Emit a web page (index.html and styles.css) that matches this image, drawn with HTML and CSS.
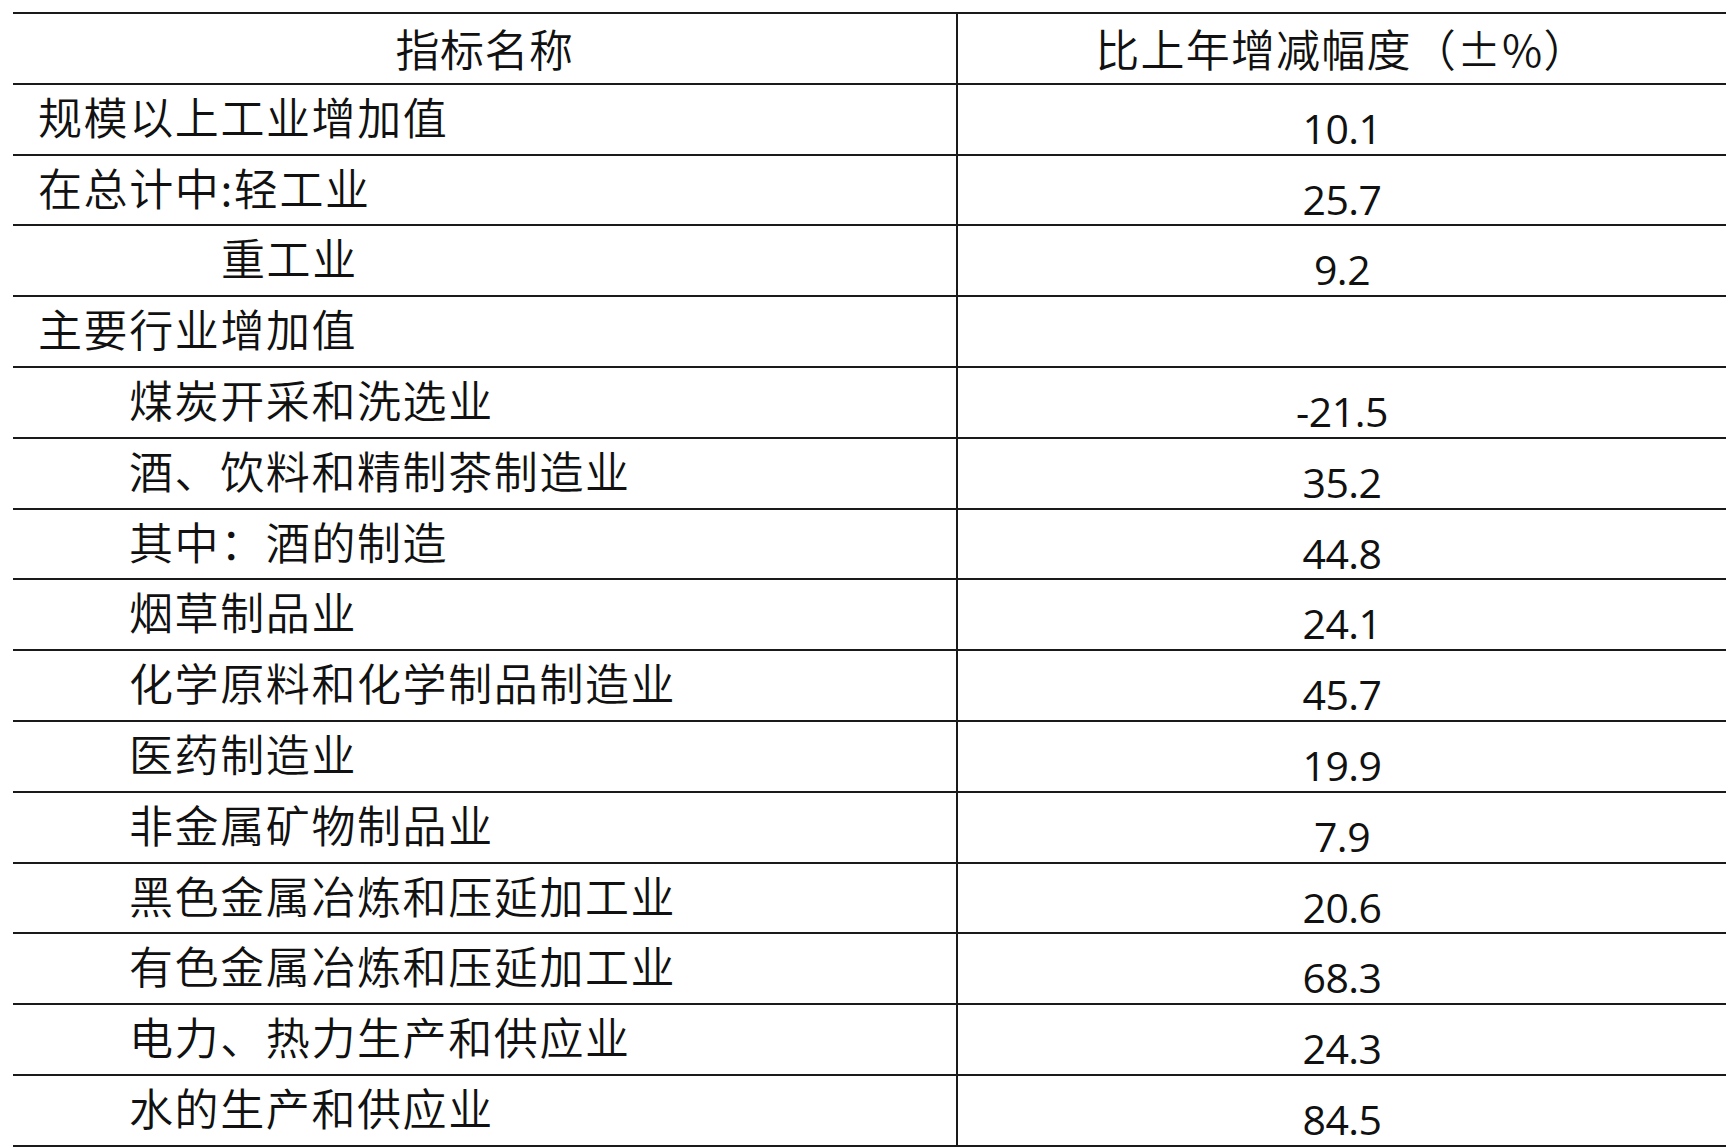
FILE: index.html
```html
<!DOCTYPE html>
<html lang="zh-CN">
<head>
<meta charset="utf-8">
<title>规模以上工业增加值</title>
<link rel="stylesheet" href="styles.css">
</head>
<body>
<div class="sheet">
  <div class="row head">
    <div class="name">指标名称</div>
    <div class="val">比上年增减幅度（±%）</div>
  </div>
  <div class="row"><div class="name">规模以上工业增加值</div><div class="val num">10.1</div></div>
  <div class="row"><div class="name">在总计中:轻工业</div><div class="val num">25.7</div></div>
  <div class="row"><div class="name ind2">重工业</div><div class="val num">9.2</div></div>
  <div class="row"><div class="name">主要行业增加值</div><div class="val num"></div></div>
  <div class="row"><div class="name ind1">煤炭开采和洗选业</div><div class="val num">-21.5</div></div>
  <div class="row"><div class="name ind1">酒、饮料和精制茶制造业</div><div class="val num">35.2</div></div>
  <div class="row"><div class="name ind1">其中：酒的制造</div><div class="val num">44.8</div></div>
  <div class="row"><div class="name ind1">烟草制品业</div><div class="val num">24.1</div></div>
  <div class="row"><div class="name ind1">化学原料和化学制品制造业</div><div class="val num">45.7</div></div>
  <div class="row"><div class="name ind1">医药制造业</div><div class="val num">19.9</div></div>
  <div class="row"><div class="name ind1">非金属矿物制品业</div><div class="val num">7.9</div></div>
  <div class="row"><div class="name ind1">黑色金属冶炼和压延加工业</div><div class="val num">20.6</div></div>
  <div class="row"><div class="name ind1">有色金属冶炼和压延加工业</div><div class="val num">68.3</div></div>
  <div class="row"><div class="name ind1">电力、热力生产和供应业</div><div class="val num">24.3</div></div>
  <div class="row"><div class="name ind1">水的生产和供应业</div><div class="val num">84.5</div></div>
</div>
</body>
</html>
```

FILE: styles.css
```css
html, body {
  margin: 0;
  padding: 0;
  background: #ffffff;
}

body {
  color: #111111;
  font-family: "Noto Sans CJK SC", "Noto Sans", sans-serif;
}

.sheet {
  margin: 12px 0 0 13px;
  width: 1713px;
  border-top: 2px solid #1a1a1a;
}

.row {
  display: grid;
  grid-template-columns: 945px 1fr;
  height: 68.8px;
  border-bottom: 2px solid #1a1a1a;
}

.name {
  border-right: 2px solid #1a1a1a;
  font-size: 44px;
  line-height: 44px;
  letter-spacing: 1.6px;
  padding: 9px 0 0 25px;
  white-space: nowrap;
  font-weight: 350;
}

.name.ind1 {
  padding-left: 116px;
}

.name.ind2 {
  padding-left: 208px;
}

.val {
  text-align: center;
  font-size: 44px;
  line-height: 44px;
  letter-spacing: 1.2px;
  padding-top: 11px;
  white-space: nowrap;
  font-weight: 350;
}

.head .name {
  padding: 12px 0 0 0;
  text-align: center;
  letter-spacing: 0.5px;
}

.head .val {
  padding-top: 12px;
}

.val.num {
  font-family: "Open Sans", "Lato", sans-serif;
  font-weight: 400;
  font-size: 41px;
  line-height: 41px;
  letter-spacing: -0.5px;
  padding-top: 23px;
}
```
